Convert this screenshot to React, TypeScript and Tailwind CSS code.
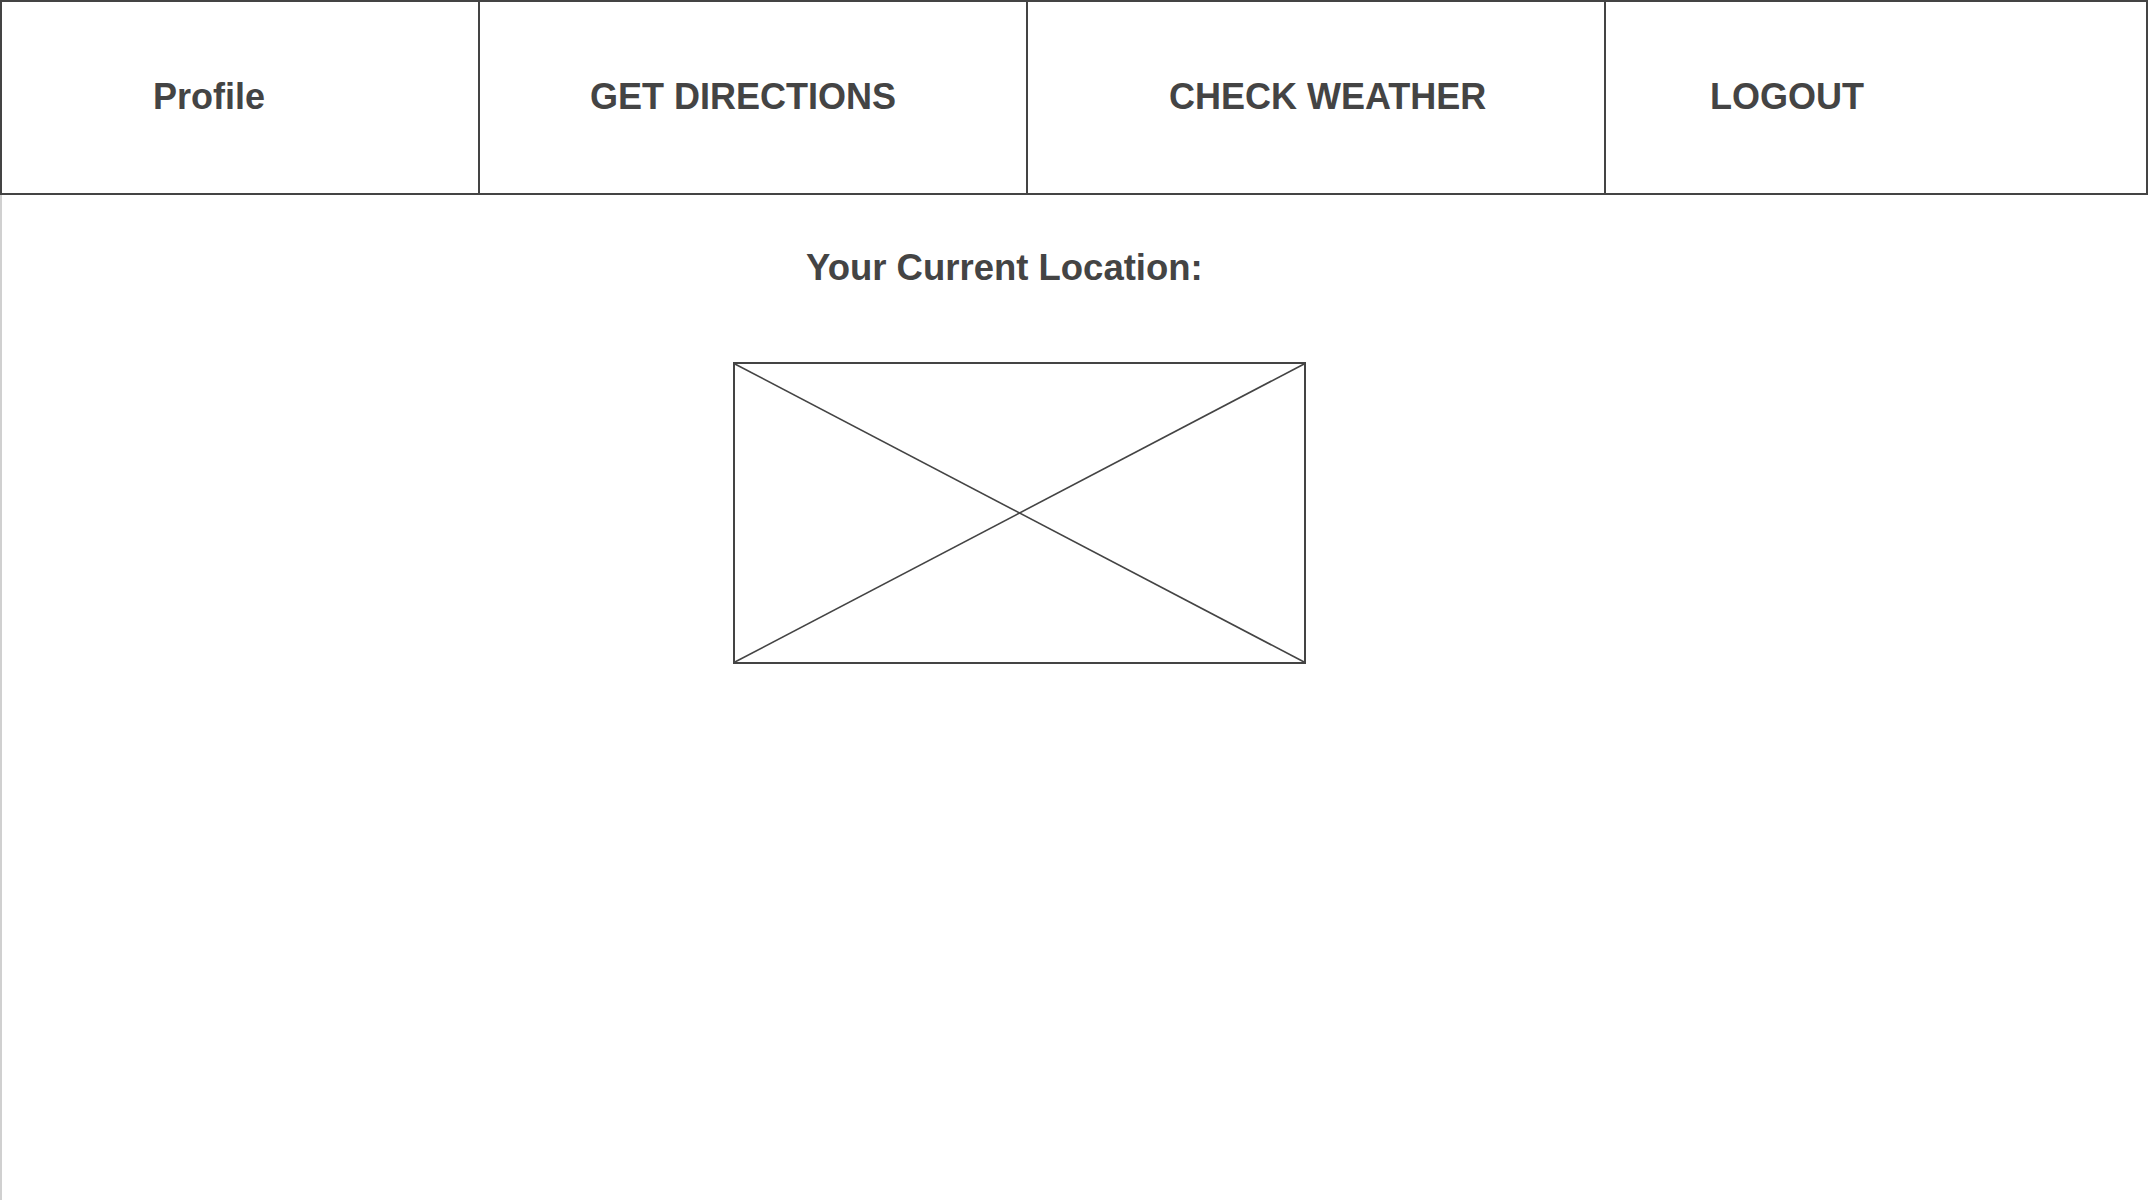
import React from 'react';

const navItems = [
  { label: 'Profile', cell: 'w-[478px] border-r-2 pl-[151px]' },
  { label: 'GET DIRECTIONS', cell: 'w-[548px] border-r-2 pl-[110px]' },
  { label: 'CHECK WEATHER', cell: 'w-[578px] border-r-2 pl-[141px]' },
  { label: 'LOGOUT', cell: 'flex-1 pl-[104px]' },
];

const ImagePlaceholder: React.FC = () => (
  <div className="w-[573px] h-[302px] border-2 border-[#444444]">
    <svg className="w-full h-full block" viewBox="0 0 569 298" preserveAspectRatio="none">
      <line x1="0" y1="0" x2="569" y2="298" stroke="#444444" strokeWidth="1.6" />
      <line x1="569" y1="0" x2="0" y2="298" stroke="#444444" strokeWidth="1.6" />
    </svg>
  </div>
);

const App: React.FC = () => {
  return (
    <div
      className="min-h-screen flex flex-col bg-white text-[#444444]"
      style={{ fontFamily: '"Liberation Sans", Arial, sans-serif' }}
    >
      <nav className="flex h-[195px] border-2 border-[#444444]">
        {navItems.map((item) => (
          <div key={item.label} className={`flex items-center pb-[2px] border-[#444444] ${item.cell}`}>
            <span className="text-[36px] font-bold leading-none">{item.label}</span>
          </div>
        ))}
      </nav>

      <main className="flex-1 flex flex-col border-l-2 border-[#d0d0d0] pl-[731px]">
        <h1 className="ml-[73px] mt-[52px] text-[36.5px] font-bold leading-[41px]">Your Current Location:</h1>
        <div className="mt-[74px]">
          <ImagePlaceholder />
        </div>
      </main>
    </div>
  );
};

export default App;
